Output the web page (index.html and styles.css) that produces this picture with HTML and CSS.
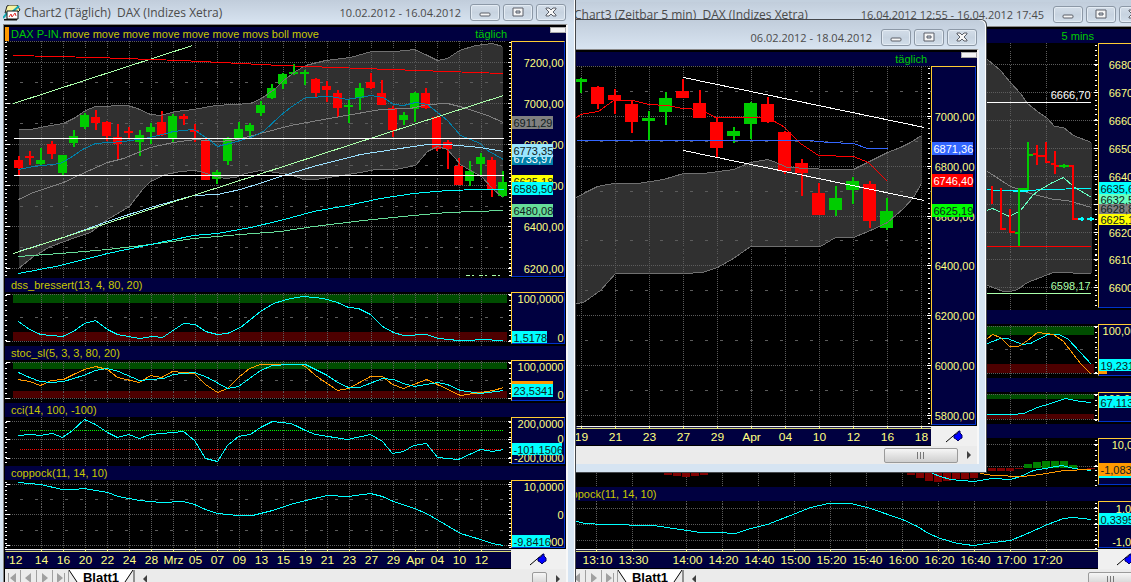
FILE: index.html
```html
<!DOCTYPE html>
<html lang="de">
<head>
<meta charset="utf-8">
<title>DAX (Indizes Xetra)</title>
<link rel="stylesheet" href="styles.css">
</head>
<body>
<main class="desktop">

<!-- Chart3, 5 min bars -->
<section class="window intraday">
  <header class="titlebar">
    <h2>Chart3 (Zeitbar 5 min)&nbsp; DAX (Indizes Xetra)</h2>
    <span class="range">16.04.2012 12:55 - 16.04.2012 17:45</span>
    <button class="min" aria-label="Minimieren"><svg width="30" height="17"><rect x="10" y="9" width="10" height="3" rx="1"/></svg></button>
    <button class="max" aria-label="Maximieren"><svg width="30" height="17"><path fill-rule="evenodd" d="M10 4h10v8h-10zM13 7h4v2h-4z"/></svg></button>
    <button class="close" aria-label="Schließen"><svg width="30" height="17"><path d="M10 4h3l2 2 2-2h3v1l-3 3 3 3v1h-3l-2-2-2 2h-3v-1l3-3-3-3z"/></svg></button>
  </header>
  <div class="client">
    <div class="head"><span class="label"></span><span class="period">5 mins</span><i class="handle"></i></div>
    <div class="pane">
      <svg class="plot" height="267" viewBox="553.5 42.5 544 267" preserveAspectRatio="none">
        <defs><path id="hours" class="dots" d="M596 0V600M632 0V600M686 0V600M722 0V600M758 0V600M794 0V600M830 0V600M866 0V600M902 0V600M938 0V600M974 0V600M1010 0V600M1046 0V600"/></defs>
        <path class="band" d="M970 40L987 59 1000 70 1010 82 1020 93 1027 103 1037 111 1047 118 1054 126 1063 127 1073 135 1091 142V273L1053 272 1027 282 1017 289 1010 291 1003 291 987 285 970 285z"/>
        <use href="#hours"/>
        <path class="dots" d="M554 64H1097M554 92H1097M554 120H1097M554 148H1097M554 176H1097M554 204H1097M554 232H1097M554 259H1097M554 287H1097"/>
        <path class="edge" d="M970 40L987 59 1000 70 1010 82 1020 93 1027 103 1037 111 1047 118 1054 126 1063 127 1073 135 1091 142M1091 273L1053 272 1027 282 1017 289 1010 291 1003 291 987 285"/>
        <path class="line white" d="M970 102H1090"/>
        <path class="line red" d="M970 246H1090"/>
        <path class="line lime" d="M970 293H1090"/>
        <path class="line grey" d="M980 167L987 171 1010 186 1030 193 1053 199 1067 200 1091 207"/>
        <path class="line cyan" d="M980 189L1023 191 1040 189 1091 188M996 190H1031"/>
        <path class="line aqua" d="M980 212L992 208 1009 216 1020 210 1032 195 1037 191 1050 183 1063 177 1073 186 1091 197"/>
        <path class="bar down" d="M991 185V203M1000 187V229M1000 228H1005M1009 208V232M1009 231H1014M1036 144V164M1032 153H1036M1036 155H1045M1045 141V162M1045 161H1049M1054 150V173M1050 163H1054M1054 165H1058M1067 165H1073M1072 164V219M1072 218H1077"/>
        <path class="bar up" d="M1018 188V245M1014 232H1018M1017 188H1027M1027 141V189M1027 154H1032M1058 165H1068M1063 163V167"/>
        <path class="bar cyan" d="M1077 218H1083M1086 218H1093M1081 216V220M1090 216V220"/>
        <text class="note white" x="1090" y="98">6666,70</text>
        <text class="note lime" x="1090" y="289">6598,17</text>
        <path class="ticks five" d="M1095.5 44V308"/>
        <path class="major" d="M1093 64H1098M1093 92H1098M1093 120H1098M1093 148H1098M1093 176H1098M1093 204H1098M1093 232H1098M1093 259H1098M1093 287H1098"/>
      </svg>
      <svg class="scale" height="265" viewBox="1098.5 43.5 52 263">
        <text x="1148" y="68">6680,00</text><text x="1148" y="96">6670,00</text><text x="1148" y="124">6660,00</text><text x="1148" y="152">6650,00</text><text x="1148" y="180">6640,00</text><text x="1148" y="236">6620,00</text><text x="1148" y="263">6610,00</text><text x="1148" y="291">6600,00</text>
        <rect class="yellow" x="1099" y="213" width="41" height="12"/><text class="tag" x="1100" y="223">6625,19</text>
        <rect class="grey" x="1099" y="203" width="41" height="11"/><text class="tag" x="1100" y="212">6628,81</text>
        <rect class="aqua" x="1099" y="193" width="41" height="11"/><text class="tag" x="1100" y="203">6632,54</text>
        <rect class="cyan" x="1099" y="182" width="41" height="12"/><text class="tag" x="1100" y="192">6635,60</text>
      </svg>
    </div>
    <div class="head"></div>
    <div class="pane">
      <svg class="plot" height="54" viewBox="553.5 323.5 544 54" preserveAspectRatio="none">
        <path class="hi" d="M570 325.500H1093.500V334.500H570z"/><path class="lo" d="M570 363.500H1093.500V372.500H570z"/>
        <use href="#hours"/>
        <path class="dots" d="M554 326H1097M554 373H1097"/><path class="dash" d="M554 349H1097"/>
        <path class="line cyan" d="M980 346L987 343 1000 338 1007 338 1022 344 1030 343 1047 334 1058 334 1067 338 1080 352 1091 364"/>
        <path class="line orange" d="M980 344L987 338 992 334 1000 337 1009 346 1018 346 1027 340 1037 332 1053 334 1063 341 1080 363 1091 374"/>
        <path class="ticks five" d="M1095.5 326V374"/><path class="major" d="M1093 326H1098M1093 373H1098"/>
      </svg>
      <svg class="scale" height="52" viewBox="1098.500 324.500 52 50">
        <text x="1148" y="334">100,0000</text>
        <rect class="orange" x="1099" y="362" width="8" height="12"/>
        <rect class="cyan" x="1099" y="359" width="41" height="12"/><text class="tag" x="1100" y="369">19,2310</text>
      </svg>
    </div>
    <div class="head"></div>
    <div class="pane">
      <svg class="plot" height="32" viewBox="553.5 391.5 544 32" preserveAspectRatio="none">
        <path class="hi" d="M570 393.500H1093.500V398.500H570z"/><path class="lo" d="M570 413.500H1093.500V418.500H570z"/>
        <use href="#hours"/>
        <path class="dots" d="M554 394H1097M554 419H1097"/>
        <path class="line cyan" d="M980 414L1013 414 1023 413 1037 407 1050 403 1065 398 1080 401 1091 402"/>
        <path class="ticks five" d="M1095.500 394V420"/><path class="major" d="M1093 394H1098M1093 419H1098"/>
      </svg>
      <svg class="scale" height="30" viewBox="1098.5 392.500 52 28">
        <text x="1148" y="402">100,0000</text>
        <rect class="cyan" x="1099" y="396" width="41" height="12"/><text class="tag" x="1100" y="406">67,1134</text>
      </svg>
    </div>
    <div class="head"></div>
    <div class="pane">
      <svg class="plot" height="49" viewBox="553.5 437.5 544 49" preserveAspectRatio="none">
        <use href="#hours"/>
        <path class="dots" d="M554 444H1097M554 466H1097"/>
        <path class="loss" d="M663 467h8v7h-8zM672 467h8v8h-8zM681 467h8v9h-8zM690 467h8v8h-8zM699 467h8v7h-8zM906 467h8v7h-8zM915 467h8v10h-8zM924 467h8v13h-8zM933 467h8v14h-8zM942 467h8v13h-8zM951 467h8v11h-8zM960 467h8v11h-8zM969 467h8v10h-8zM978 467h8v3h-8zM987 467h8v3h-8zM996 467h8v3h-8zM1005 467h8v3h-8zM1014 467h8v1h-8zM1086 467h8v1h-8z"/>
        <path class="gain" d="M1023 463h8v4h-8zM1032 461h8v6h-8zM1041 460h8v7h-8zM1050 460h8v7h-8zM1059 460h8v7h-8zM1068 464h8v3h-8z"/>
        <path class="line cyan" d="M932 473L940 476 950 479 973 481 992 478 1010 479 1020 476 1033 470 1050 467 1062 465 1073 468 1091 470"/>
        <path class="line orange" d="M980 473L993 475 1022 476 1040 474 1063 470 1091 469"/>
        <path class="ticks five" d="M1095.5 439V485"/><path class="major" d="M1093 444H1098M1093 466H1098"/>
      </svg>
      <svg class="scale" height="47" viewBox="1098.500 438.500 52 45">
        <text x="1151" y="448">10,0000</text>
        <rect class="cyan" x="1099" y="474" width="41" height="4"/>
        <rect class="orange" x="1099" y="463" width="41" height="13"/><text class="tag" x="1100" y="473">-1,0836</text>
      </svg>
    </div>
    <div class="head"><span class="label">coppock(11, 14, 10)</span></div>
    <div class="pane">
      <svg class="plot" height="48" viewBox="553.5 500.5 544 48" preserveAspectRatio="none">
        <use href="#hours"/>
        <path class="dots" d="M554 508H1097M554 524H1097M554 540H1097"/>
        <path class="line cyan" d="M560 518L576 521 585 523 603 524 653 525 673 528 687 530 700 532 723 532 730 533 735 533 750 528 767 524 795 513 810 507 828 503 850 503 867 507 902 519 917 526 928 533 940 538 957 543 973 545 993 542 1010 540 1027 533 1047 524 1063 518 1073 517 1091 519"/>
        <path class="ticks" d="M1095.5 502V548"/><path class="major" d="M1093 508H1098M1093 524H1098M1093 540H1098"/>
      </svg>
      <svg class="scale" height="47" viewBox="1098.5 501.5 52 45">
        <text x="1149" y="512">1,0000</text><text x="1149" y="545">-1,0000</text>
        <rect class="cyan" x="1099" y="513" width="41" height="12"/><text class="tag" x="1100" y="523">0,3395</text>
      </svg>
    </div>
    <div class="axis">
      <svg class="dates" height="20" viewBox="553.5 548.5 544 20" preserveAspectRatio="none">
        <path class="line white" d="M554 549H1098"/><path class="line sand" d="M554 551H1098M596 549V551M632 549V551M686 549V551M722 549V551M758 549V551M794 549V551M830 549V551M866 549V551M902 549V551M938 549V551M974 549V551M1010 549V551M1046 549V551"/>
        <text x="597" y="564">13:10</text><text x="633" y="564">13:30</text><text x="687" y="564">14:00</text><text x="723" y="564">14:20</text><text x="759" y="564">14:40</text><text x="795" y="564">15:00</text><text x="831" y="564">15:20</text><text x="867" y="564">15:40</text><text x="903" y="564">16:00</text><text x="939" y="564">16:20</text><text x="975" y="564">16:40</text><text x="1011" y="564">17:00</text><text x="1047" y="564">17:20</text>
      </svg>
      <div class="pin"><svg width="18" height="14"><path class="needle" d="M0 13L13 2"/><path class="knob" d="M8 6l3-1 2-3 1 0 0 2 2 2 0 3-2 1-2 2-2-2-2-1z"/></svg></div>
    </div>
    <div class="tabs">
      <button aria-label="Erstes Blatt"><svg width="15" height="12"><path d="M3 1h1v10H3zM11 1v10L5 6z"/></svg></button><button aria-label="Vorheriges Blatt"><svg width="15" height="12"><path d="M10 1v10L4 6z"/></svg></button><button aria-label="Nächstes Blatt"><svg width="15" height="12"><path d="M5 1v10l6-5z"/></svg></button><button aria-label="Letztes Blatt"><svg width="15" height="12"><path d="M4 1v10l6-5zM11 1h1v10h-1z"/></svg></button>
      <a class="sheet" href="#blatt1"><svg width="64" height="18"><path d="M0 0L12 18H52L64 0"/></svg><span>Blatt1</span></a>
      <div class="track"><i class="arrow left"></i><b class="thumb wide"></b><i class="arrow right"></i></div>
    </div>
  </div>
</section>

<!-- floating daily chart -->
<section class="window float">
  <header class="titlebar">
    <h2></h2>
    <span class="range">06.02.2012 - 18.04.2012</span>
    <button class="min" aria-label="Minimieren"><svg width="30" height="17"><rect x="10" y="9" width="10" height="3" rx="1"/></svg></button>
    <button class="max" aria-label="Maximieren"><svg width="30" height="17"><path fill-rule="evenodd" d="M10 4h10v8h-10zM13 7h4v2h-4z"/></svg></button>
    <button class="close" aria-label="Schließen"><svg width="30" height="17"><path d="M10 4h3l2 2 2-2h3v1l-3 3 3 3v1h-3l-2-2-2 2h-3v-1l3-3-3-3z"/></svg></button>
  </header>
  <div class="client">
    <div class="head"><span class="label"></span><span class="period">täglich</span><i class="handle"></i></div>
    <div class="pane">
      <svg class="plot" height="360" viewBox="575.5 65.5 355 360" preserveAspectRatio="none">
        <path class="band" d="M576 197L585 192 597 186 613 183 637 183 663 179 683 173 703 173 733 169 750 162 767 159 773 161 787 167 810 168 827 169 853 169 867 162 887 152 900 147 910 142 921 135V183L913 197 903 208 887 222 870 230 853 237 835 237 820 246 750 246 733 258 717 267 702 272 683 273 615 273 600 290 583 302 576 303z"/>
        <path class="dots" d="M581 66V426M615 66V426M649 66V426M683 66V426M717 66V426M751 66V426M785 66V426M819 66V426M853 66V426M887 66V426M921 66V426M576 66H930M576 116H930M576 166H930M576 216H930M576 265H930M576 315H930M576 365H930M576 415H930"/>
        <path class="dash" d="M584 91H930M584 141H930M584 191H930M584 240H930M584 290H930M584 340H930M584 390H930"/>
        <path class="wick up" d="M580 77V92M648 110V139M665 91V124M733 126V142M750 101V138M835 185V215M852 176V203M886 197V229"/>
        <path class="wide body up" d="M580 78V81M648 117V120M665 97V111M733 130V135M750 102V123M835 197V209M852 180V189M886 210V227"/>
        <path class="wick down" d="M597 85V108M614 88V113M631 99V132M682 78V97M699 89V117M716 117V156M767 96V122M784 130V173M801 158V195M818 182V214M869 180V227"/>
        <path class="wide body down" d="M597 86V103M614 94V99M631 103V121M682 90V97M699 102V117M716 121V147M767 103V121M784 131V170M801 162V172M818 192V214M869 183V220"/>
        <path class="edge" d="M576 197L585 192 597 186 613 183 637 183 663 179 683 173 703 173 733 169 750 162 767 159 773 161 787 167 810 168 827 169 853 169 867 162 887 152 900 147 910 142 921 135M921 183L913 197 903 208 887 222 870 230 853 237 835 237 820 246 750 246 733 258 717 267 702 272 683 273 615 273 600 290 583 302 576 303"/>
        <path class="line red" d="M576 117L580 114 598 111 613 100 633 100 648 104 667 105 682 108 700 109 715 117 767 117 783 126 800 143 818 155 853 156 868 162 887 181"/>
        <path class="line blue" d="M576 140H808L828 142 853 143 867 148H887"/>
        <path class="line white" d="M683 77L924 127M683 150L924 200"/>
        <path class="ticks five" d="M928.5 67V425"/>
        <path class="major" d="M926 116H931M926 166H931M926 216H931M926 265H931M926 315H931M926 365H931M926 415H931"/>
      </svg>
      <svg class="scale" height="359" viewBox="931.5 66.5 43 357">
        <text x="974" y="120">7000,00</text><text x="974" y="170">6800,00</text><text x="974" y="220">6600,00</text><text x="974" y="269">6400,00</text><text x="974" y="319">6200,00</text><text x="974" y="369">6000,00</text><text x="974" y="419">5800,00</text>
        <rect class="blue" x="932" y="142" width="41" height="13"/><text class="tag light" x="933" y="152">6871,36</text>
        <rect class="red" x="932" y="174" width="41" height="13"/><text class="tag light" x="933" y="184">6746,40</text>
        <rect class="green" x="932" y="204" width="41" height="13"/><text class="tag" x="933" y="214">6625,19</text>
      </svg>
    </div>
    <div class="axis">
      <svg class="dates" height="20" viewBox="575.5 425.5 355 20" preserveAspectRatio="none">
        <path class="line white" d="M576 426H931"/><path class="line sand" d="M576 428H931M581 426V428M615 426V428M649 426V428M683 426V428M717 426V428M751 426V428M785 426V428M819 426V428M853 426V428M887 426V428M921 426V428"/>
        <text x="581" y="441">19</text><text x="615" y="441">21</text><text x="649" y="441">23</text><text x="683" y="441">27</text><text x="717" y="441">29</text><text x="751" y="441">Apr</text><text x="785" y="441">04</text><text x="819" y="441">10</text><text x="853" y="441">12</text><text x="887" y="441">16</text><text x="921" y="441">18</text>
      </svg>
      <div class="pin"><svg width="18" height="14"><path class="needle" d="M0 13L13 2"/><path class="knob" d="M8 6l3-1 2-3 1 0 0 2 2 2 0 3-2 1-2 2-2-2-2-1z"/></svg></div>
    </div>
    <div class="track"><b class="thumb wide"></b><i class="arrow right"></i></div>
  </div>
</section>

<!-- Chart2, daily with indicators -->
<section class="window daily">
  <header class="titlebar">
    <svg class="icon" width="18" height="16"><path d="M4 1l2-1 8 0 3 5-3 3H2z" fill="#f7f2a0" stroke="#222"/><path d="M0 13L5 7 8 8 16 1" fill="none" stroke="#17a9b5" stroke-width="2"/><path d="M4 6h11v8H4z" fill="#fff" stroke="#111"/><path d="M1 14h13v1.500H1z" fill="#111"/><path d="M6 12l2-3 1 3 3-4 1 3" fill="none" stroke="#e03030"/></svg>
    <h2>Chart2 (Täglich)&nbsp; DAX (Indizes Xetra)</h2>
    <span class="range">10.02.2012 - 16.04.2012</span>
    <button class="min" aria-label="Minimieren"><svg width="30" height="17"><rect x="10" y="9" width="10" height="3" rx="1"/></svg></button>
    <button class="max" aria-label="Maximieren"><svg width="30" height="17"><path fill-rule="evenodd" d="M10 4h10v8h-10zM13 7h4v2h-4z"/></svg></button>
    <button class="close" aria-label="Schließen"><svg width="30" height="17"><path d="M10 4h3l2 2 2-2h3v1l-3 3 3 3v1h-3l-2-2-2 2h-3v-1l3-3-3-3z"/></svg></button>
  </header>
  <div class="client">
    <div class="head main"><span class="symbol">DAX P-IN.</span><span class="label">move move move move move move movs boll move</span><span class="period">täglich</span><i class="handle"></i></div>
    <div class="pane">
      <svg class="plot" height="237" viewBox="4.5 40.5 506 237" preserveAspectRatio="none">
        <defs><path id="days" class="dots" d="M41 0V600M63 0V600M85 0V600M107 0V600M129 0V600M151 0V600M173 0V600M195 0V600M217 0V600M239 0V600M261 0V600M283 0V600M305 0V600M327 0V600M349 0V600M371 0V600M393 0V600M415 0V600M437 0V600M459 0V600M481 0V600"/></defs>
        <path class="band" d="M18 129L30 129 45 126 63 123 75 117 85 110 95 106 127 105 137 108 150 114 160 115 175 111 193 109 215 105 250 103 261 98 275 88 283 80 295 71 305 65 325 60 350 57 371 51 395 51 414 49 425 54 437 60 447 58 459 50 475 45 492 43 502 46V197L492 188 481 176 470 170 460 164 447 149 437 146 427 151 415 165 395 169 375 169 360 172 335 176 315 179 303 179 290 174 275 172 260 170 245 173 235 177 225 178 215 176 200 171 193 170 180 171 165 174 150 181 142 189 129 206 107 219 90 232 75 237 50 246 33 256 18 268z"/>
        <use href="#days"/>
        <path class="dots" d="M5 41H504M5 62H510M5 103H510M5 144H510M5 185H510M5 226H510M5 268H510"/>
        <path class="dash" d="M19 82H504M19 123H504M19 165H504M19 206H504M19 247H504"/>
        <path class="wick up" d="M40 147V165M62 154V175M73 129V146M84 112V128M139 129V155M150 122V143M172 113V141M216 169V183M227 136V164M238 121V138M249 122V135M260 100V115M271 83V98M282 72V88M293 63V74M304 69V84M348 98V122M359 82V109M403 111V124M414 91V121M469 160V185M480 152V176M502 170V196"/>
        <path class="body up" d="M40 159V163M62 154V172M73 135V142M84 114V126M139 134V141M150 126V131M172 115V138M216 171V178M227 137V160M238 128V137M249 124V130M260 104V112M271 87V97M282 73V83M293 71V73M304 71V73M348 104V106M359 87V97M403 114V119M414 92V108M469 170V180M480 156V163M502 181V195"/>
        <path class="wick down" d="M18 155V175M29 150V164M51 140V158M95 109V129M106 120V140M117 123V158M128 126V138M161 110V135M183 113V124M194 123V141M205 136V179M315 77V96M326 80V101M337 89V116M370 72V88M381 79V104M392 105V136M425 87V108M436 115V150M447 139V168M458 157V184M491 156V196"/>
        <path class="body down" d="M18 159V167M29 155V157M51 143V153M95 116V122M106 121V135M117 136V143M128 130V132M161 121V134M183 115V118M194 129V131M205 139V179M315 78V92M326 85V89M337 92V107M370 81V87M381 92V104M392 107V129M425 92V107M436 116V148M447 141V148M458 165V184M491 159V188"/>
        <path class="edge" d="M18 129L30 129 45 126 63 123 75 117 85 110 95 106 127 105 137 108 150 114 160 115 175 111 193 109 215 105 250 103 261 98 275 88 283 80 295 71 305 65 325 60 350 57 371 51 395 51 414 49 425 54 437 60 447 58 459 50 475 45 492 43 502 46M502 197L492 188 481 176 470 170 460 164 447 149 437 146 427 151 415 165 395 169 375 169 360 172 335 176 315 179 303 179 290 174 275 172 260 170 245 173 235 177 225 178 215 176 200 171 193 170 180 171 165 174 150 181 142 189 129 206 107 219 90 232 75 237 50 246 33 256 18 268"/>
        <path class="line grey" d="M18 199L33 192 63 182 80 174 107 162 123 158 150 147 173 142 195 139 217 141 233 140 260 133 290 125 323 119 380 109 410 108 427 104 447 103 463 107 487 115 503 122"/>
        <path class="line teal" d="M18 169L33 166 60 163 72 156 82 149 95 143 123 141 150 137 173 131 193 129 207 138 217 146 233 142 250 137 263 131 280 115 290 107 305 97 330 96 347 99 370 95 383 97 393 104 403 105 415 102 427 104 447 120 460 135 480 143 487 150 503 159"/>
        <path class="line mint" d="M18 256L60 253 107 249 150 244 193 238 240 234 280 231 313 226 363 220 413 215 447 212 503 210"/>
        <path class="line cyan" d="M18 273L60 265 107 253 150 244 193 235 217 233 250 227 280 220 313 211 347 205 380 198 413 193 447 190 480 189 503 189"/>
        <path class="line sky" d="M18 251L60 238 107 221 150 207 193 195 217 194 240 189 262 182 280 176 313 166 360 154 413 146 427 144 447 144 480 147 503 151"/>
        <path class="line lime" d="M13 103L192 45M13 253L503 95"/>
        <path class="line red" d="M13 55L95 57 180 60 280 65 390 69 503 73"/>
        <path class="line white" d="M13 138H503M13 175H503"/>
        <path class="line lime" stroke-dasharray="4 2 2 5" d="M465 275H503"/>
        <path class="ticks" d="M5.500 41V275M509.500 41V275"/>
        <path class="major" d="M5 62H9M5 103H9M5 144H9M5 185H9M5 226H9M5 268H9M507 62H511M507 103H511M507 144H511M507 185H511M507 226H511M507 268H511"/>
      </svg>
      <svg class="scale" height="236" viewBox="511.5 41.500 52 234">
        <text x="563" y="66">7200,00</text><text x="563" y="107">7000,00</text><text x="563" y="148">6800,00</text><text x="563" y="189">6600,00</text><text x="563" y="230">6400,00</text><text x="563" y="272">6200,00</text>
        <rect class="grey" x="512" y="116" width="41" height="13"/><text class="tag" x="513" y="126">6911,29</text>
        <rect class="teal" x="512" y="152" width="41" height="13"/><text class="tag light" x="513" y="162">6733,97</text>
        <rect class="sky" x="512" y="144" width="41" height="13"/><text class="tag" x="513" y="154">6773,35</text>
        <rect class="yellow" x="512" y="175" width="41" height="13"/><text class="tag" x="513" y="185">6625,18</text>
        <rect class="cyan" x="512" y="182" width="41" height="13"/><text class="tag" x="513" y="192">6589,50</text>
        <rect class="mint" x="512" y="204" width="41" height="13"/><text class="tag" x="513" y="214">6480,08</text>
      </svg>
    </div>
    <div class="head"><span class="label">dss_bressert(13, 4, 80, 20)</span></div>
    <div class="pane">
      <svg class="plot" height="54" viewBox="4.5 291.5 506 54" preserveAspectRatio="none">
        <path class="hi" d="M12.500 293.500H506.500V302.500H12.500z"/><path class="lo" d="M12.500 331.500H506.500V340.500H12.500z"/>
        <use href="#days"/>
        <path class="dots" d="M5 294H510M5 341H510"/><path class="dash" d="M19 317H504"/>
        <path class="line cyan" d="M18 321L29 329 40 334 62 336 73 331 84 323 95 320 107 329 117 334 139 338 152 336 162 337 183 323 195 324 205 331 217 334 227 333 240 327 260 311 273 303 290 298 303 296 323 298 337 302 348 307 358 308 370 314 382 326 393 332 403 335 426 334 438 338 458 340 469 340 480 339 503 340"/>
        <path class="ticks five" d="M5.5 294V342M509.500 294V342"/><path class="major" d="M5 294H9M5 341H9M507 294H511M507 341H511"/>
      </svg>
      <svg class="scale" height="52" viewBox="511.5 292.500 52 50">
        <text x="563" y="302">100,0000</text><text x="563" y="341">0</text>
        <rect class="cyan" x="512" y="331" width="35" height="12"/><text class="tag" x="513" y="341">1,5178</text>
      </svg>
    </div>
    <div class="head"><span class="label">stoc_sl(5, 3, 3, 80, 20)</span></div>
    <div class="pane">
      <svg class="plot" height="43" viewBox="4.5 359.5 506 43" preserveAspectRatio="none">
        <path class="hi" d="M12.500 361.500H506.500V368.500H12.500z"/><path class="lo" d="M12.500 390.500H506.500V397.500H12.500z"/>
        <use href="#days"/>
        <path class="dots" d="M5 362H510M5 398H510"/><path class="dash" d="M19 380H504"/>
        <path class="line orange" d="M18 379L29 381 40 385 51 380 63 379 73 374 84 369 95 366 107 369 117 377 139 382 150 375 161 377 172 371 194 373 205 384 217 392 227 388 238 377 249 368 260 364 300 364 305 366 315 375 337 390 348 388 370 376 382 376 392 384 403 388 426 379 437 384 460 395 480 392 493 390 503 387"/>
        <path class="line cyan" d="M18 372L29 377 40 381 51 382 63 381 83 375 95 370 107 368 118 371 139 380 163 378 173 374 183 373 194 372 207 377 227 388 238 386 260 370 272 365 290 364 305 364 315 369 327 375 337 382 348 387 359 387 382 378 393 379 403 383 414 386 437 382 447 384 460 390 480 393 503 390"/>
        <path class="ticks five" d="M5.5 362V399M509.500 362V399"/><path class="major" d="M5 362H9M5 398H9M507 362H511M507 398H511"/>
      </svg>
      <svg class="scale" height="41" viewBox="511.5 360.500 52 39">
        <text x="563" y="370">100,0000</text><text x="563" y="398">0</text>
        <rect class="orange" x="512" y="381" width="41" height="6"/>
        <rect class="cyan" x="512" y="384" width="41" height="13"/><text class="tag" x="513" y="394">23,5341</text>
      </svg>
    </div>
    <div class="head"><span class="label">cci(14, 100, -100)</span></div>
    <div class="pane">
      <svg class="plot" height="49" viewBox="4.5 416.5 506 49" preserveAspectRatio="none">
        <use href="#days"/>
        <path class="dots" d="M5 421H510M5 439H510M5 458H510"/>
        <path class="dots buy" d="M19 430H502"/><path class="dots sell" d="M19 449H502"/>
        <path class="line cyan" d="M18 435L30 434 40 435 52 433 62 437 72 430 84 419 95 424 107 432 117 437 128 434 139 438 150 434 183 431 194 440 205 458 217 461 227 445 238 436 250 434 260 427 272 421 290 423 295 425 305 430 315 434 347 439 370 434 382 441 392 453 403 451 413 445 426 443 437 457 458 459 469 454 480 449 492 451 503 449"/>
        <path class="ticks five" d="M5.5 421V463M509.500 421V463"/><path class="major" d="M5 421H9M5 439H9M5 458H9M507 421H511M507 439H511M507 458H511"/>
      </svg>
      <svg class="scale" height="47" viewBox="511.5 417.500 52 45">
        <text x="563" y="427">200,0000</text><text x="563" y="442">0</text><text x="563" y="461">-200,0000</text>
        <rect class="cyan" x="512" y="443" width="50" height="12"/><text class="tag" x="513" y="453">-101,1506</text>
      </svg>
    </div>
    <div class="head"><span class="label">coppock(11, 14, 10)</span></div>
    <div class="pane">
      <svg class="plot" height="69" viewBox="4.5 479.5 506 69" preserveAspectRatio="none">
        <use href="#days"/>
        <path class="dots" d="M5 484H510M5 514H510M5 545H510"/><path class="dash" d="M19 499H504M19 530H504"/>
        <path class="line cyan" d="M18 482L40 484 62 489 73 489 84 488 107 492 118 496 139 500 161 502 183 501 194 504 205 509 217 513 238 515 252 515 272 510 290 504 305 500 327 495 348 496 370 493 382 496 393 501 414 508 426 513 438 520 460 533 480 539 492 543 503 545"/>
        <path class="ticks" d="M5.5 481V547M509.500 481V547"/><path class="major" d="M5 484H9M5 514H9M5 545H9M507 484H511M507 514H511M507 545H511"/>
      </svg>
      <svg class="scale" height="68" viewBox="511.5 480.500 52 66">
        <text x="563" y="490">10,0000</text><text x="563" y="518">0</text><text x="563" y="545">-10,0000</text>
        <rect class="cyan" x="512" y="535" width="38" height="12"/><text class="tag" x="513" y="545">-9,8416</text>
      </svg>
    </div>
    <div class="axis">
      <svg class="dates" height="20" viewBox="4.5 548.5 506 20" preserveAspectRatio="none">
        <path class="line white" d="M4 549H511"/><path class="line sand" d="M5 551H511M41 549V551M63 549V551M85 549V551M107 549V551M129 549V551M151 549V551M173 549V551M195 549V551M217 549V551M239 549V551M261 549V551M283 549V551M305 549V551M327 549V551M349 549V551M371 549V551M393 549V551M415 549V551M437 549V551M459 549V551M481 549V551"/>
        <text x="14" y="564">'12</text><text x="41" y="564">14</text><text x="63" y="564">16</text><text x="85" y="564">20</text><text x="107" y="564">22</text><text x="129" y="564">24</text><text x="151" y="564">28</text><text x="173" y="564">Mrz</text><text x="195" y="564">05</text><text x="217" y="564">07</text><text x="239" y="564">09</text><text x="261" y="564">13</text><text x="283" y="564">15</text><text x="305" y="564">19</text><text x="327" y="564">21</text><text x="349" y="564">23</text><text x="371" y="564">27</text><text x="393" y="564">29</text><text x="415" y="564">Apr</text><text x="437" y="564">04</text><text x="459" y="564">10</text><text x="481" y="564">12</text>
      </svg>
      <div class="pin"><svg width="18" height="14"><path class="needle" d="M0 13L13 2"/><path class="knob" d="M8 6l3-1 2-3 1 0 0 2 2 2 0 3-2 1-2 2-2-2-2-1z"/></svg></div>
    </div>
    <div class="tabs">
      <button aria-label="Erstes Blatt"><svg width="15" height="12"><path d="M3 1h1v10H3zM11 1v10L5 6z"/></svg></button><button aria-label="Vorheriges Blatt"><svg width="15" height="12"><path d="M10 1v10L4 6z"/></svg></button><button aria-label="Nächstes Blatt"><svg width="15" height="12"><path d="M5 1v10l6-5z"/></svg></button><button aria-label="Letztes Blatt"><svg width="15" height="12"><path d="M4 1v10l6-5zM11 1h1v10h-1z"/></svg></button>
      <a class="sheet" href="#blatt1"><svg width="64" height="18"><path d="M0 0L12 18H52L64 0"/></svg><span>Blatt1</span></a>
      <div class="track"><i class="arrow left"></i><b class="thumb"></b><i class="arrow right"></i></div>
    </div>
  </div>
</section>

</main>
</body>
</html>
```
FILE: styles.css
```css
* { box-sizing: border-box; }

body {
margin: 0;
font-family: "Liberation Sans", Arial, sans-serif;
font-size: 11px;
}

.desktop {
position: relative;
height: 100vh;
overflow: hidden;
background: #c3d0de;
}

/* windows */
.window {
position: absolute;
padding: 0 7px 8px 3px;
border-right: 1px solid #45484c;
background: #d6e4f2;
box-shadow: inset -1px 0 #fff;
}

.daily { top: 0; left: 0; width: 576px; }
.float { top: 19px; left: 571px; right: 144px; border-top: 1px solid #45484c; border-bottom: 1px solid #45484c; border-top-right-radius: 6px; box-shadow: inset -1px 1px #fff; }
.intraday { top: 2px; left: 549px; right: -32px; }

.titlebar {
display: flex;
align-items: center;
gap: 3px;
height: 24px;
margin: 0 -6px 0 -3px;
padding: 1px 8px 0 3px;
background: linear-gradient(#c1cddb, #d8e4f1);
color: #4b4b4b;
font-family: "Open Sans", "Noto Sans", sans-serif;
font-size: 11px;
white-space: nowrap;
}

.float .titlebar { height: 29px; padding-top: 6px; border-top-right-radius: 6px; }
.intraday .titlebar { padding-right: 12px; }

.titlebar h2 {
flex: 1;
margin: 0;
font-size: 12px;
font-weight: normal;
}

.intraday h2 { padding-left: 22px; }
.range { margin-right: 6px; }

.titlebar button {
width: 30px;
height: 17px;
padding: 0;
border: 1px solid #8c98a6;
border-radius: 3px;
background: linear-gradient(#d3dde8, #c7d3e0 50%, #d2deea);
box-shadow: inset 0 0 0 1px #e4ecf4;
}

.titlebar button svg { display: block; margin: -1px; }
.titlebar button path, .titlebar button rect { fill: #f6f6f6; stroke: #5a5f68; }

.client {
padding: 2px 0 0 1px;
border-top: 1px solid #8a8a8a;
border-left: 1px solid #8a8a8a;
border-right: 2px solid #f8f8f8;
background: #000;
}

/* pane captions */
.head {
display: flex;
height: 14px;
padding-left: 6px;
background: #000040;
color: #c8c800;
line-height: 14px;
white-space: nowrap;
}

.head.main { padding-left: 2px; border-left: 4px solid #ff9900; }
.symbol { margin-right: 1px; color: #00cc00; }
.label { flex: 1; }
.period { margin-right: 43px; color: #00cc00; }
.float .period { margin-right: 34px; }
.handle { width: 16px; height: 6px; border: 1px solid #aaa; background: #f4f4f4; }

/* plots */
.pane { display: flex; align-items: flex-start; padding-right: 1px; }
.plot, .scale, .dates { display: block; shape-rendering: crispEdges; }
.plot, .dates { flex: 1; min-width: 0; }

.scale {
width: 54px;
border: 1px solid #ffcc33;
border-right-color: #0033cc;
border-bottom-color: #0033cc;
background: #000040;
}

.float .scale { width: 45px; }

.scale text { fill: #ffff80; text-anchor: end; }
.scale .tag { fill: #102020; text-anchor: start; }
.scale .light { fill: #fff; }
.scale rect { transform: translate(-.5px, -.5px); }

.band { fill: #303030; }
.edge { fill: none; stroke: #707070; }
.dots { fill: none; stroke: #5c5c5c; stroke-dasharray: 1 1; }
.dots.buy { stroke: #00ff00; }
.dots.sell { stroke: #ff0000; }
.dash { stroke: #5c5c5c; stroke-dasharray: 3 12; }
.hi { fill: #004d00; }
.lo { fill: #4d0000; }
.gain { fill: #008000; }
.loss { fill: #800000; }
.ticks { stroke: #fff; stroke-width: 2; stroke-dasharray: 1 3.1; }
.ticks.five { stroke-dasharray: 1 4; }
.major { stroke: #fff; }

.wick { stroke-width: 2; }
.body { stroke-width: 9; }
.body.wide { stroke-width: 13; }
.bar { fill: none; stroke-width: 2; }
.up { stroke: #00cc00; }
.down { stroke: #ff0000; }

.line { fill: none; }
.line.white { stroke: #fff; }
.line.red { stroke: #ff0000; }
.line.lime { stroke: #aaffaa; }
.line.grey { stroke: #808080; }
.line.teal { stroke: #0080aa; }
.line.cyan, .bar.cyan { stroke: #00ffff; }
.line.sky { stroke: #99e0ff; }
.line.mint { stroke: #66dd99; }
.line.aqua { stroke: #66ffc0; }
.line.orange { stroke: #ff9900; }
.line.blue { stroke: #3366ff; }
.line.sand { stroke: #ffff80; }

rect.grey { fill: #808080; }
rect.teal { fill: #0080aa; }
rect.sky { fill: #99e6ff; }
rect.yellow { fill: #ffff00; }
rect.cyan { fill: #00ffff; }
rect.mint { fill: #66dd99; }
rect.aqua { fill: #66ffc0; }
rect.orange { fill: #ff9900; }
rect.blue { fill: #3366ff; }
rect.red { fill: #ff0000; }
rect.green { fill: #00ff00; }

.note { text-anchor: end; }
.note.white { fill: #fff; }
.note.lime { fill: #aaffaa; }

/* date axis */
.axis { display: flex; background: #f0f0f0; }
.dates { border-bottom: 1px solid #000; background: #000040; }
.dates text {
fill: #ffff80;
font-size: 12px;
text-anchor: middle;
}

.pin { width: 55px; padding: 3px 0 0 19px; }
.float .pin { width: 46px; padding-left: 15px; }
.needle { fill: none; stroke: #000; }
.knob { fill: #0000ff; stroke: #000060; }

/* sheet tabs and scroll bars */
.tabs {
display: flex;
height: 20px;
padding-top: 1px;
background: #ececec;
}

.tabs button {
width: 16px;
height: 18px;
padding: 1px 0;
border: 0;
border-right: 1px solid #a0a0a0;
background: #ececec;
}

.tabs button path { fill: #a0a0a0; }

.sheet {
position: relative;
width: 64px;
color: #000;
font-size: 13px;
font-weight: bold;
line-height: 15px;
text-align: center;
text-decoration: none;
}

.sheet svg { position: absolute; left: 0; top: 0; fill: #fff; stroke: #000; }
.sheet span { position: relative; }

.track {
display: flex;
flex: 1;
align-items: center;
height: 18px;
padding: 0 6px 0 8px;
background: #ebebeb;
}

.tabs .track { border-left: 2px solid #909090; }
.arrow { border: 4px solid transparent; }
.arrow.left { border-right-color: #404040; border-left: 0; }
.arrow.right { border-left-color: #404040; border-right: 0; margin-left: 9px; }

.thumb {
width: 15px;
height: 15px;
margin-left: auto;
border: 1px solid #9a9a9a;
border-radius: 2px;
background: linear-gradient(#f6f6f6, #e2e2e2 50%, #cfcfcf);
}

.thumb.wide {
width: 74px;
background: repeating-linear-gradient(90deg, #777 0 1px, transparent 1px 3px) center / 8px 7px no-repeat, linear-gradient(#f6f6f6, #e2e2e2 50%, #cfcfcf);
}

.intraday .thumb { width: 46px; }
```
